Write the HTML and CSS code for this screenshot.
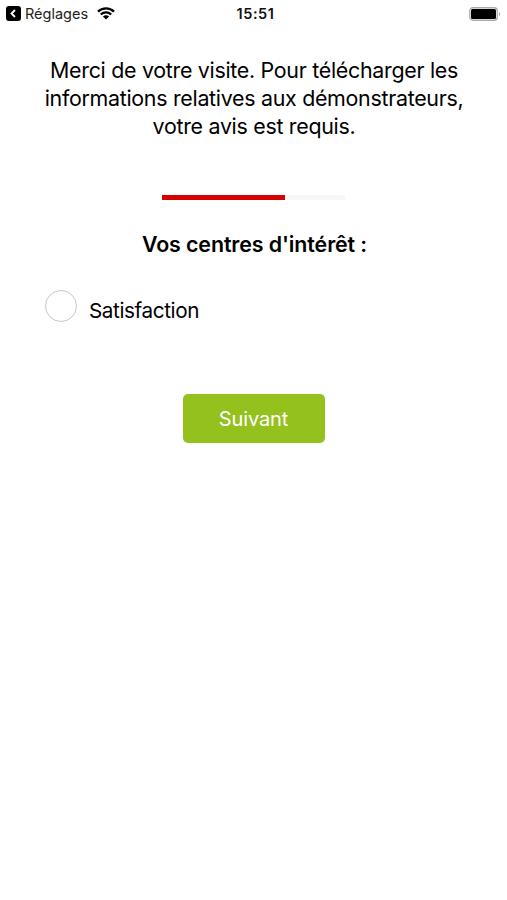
FILE: index.html
```html
<!DOCTYPE html>
<html lang="fr">
<head>
<meta charset="utf-8">
<title>Votre avis</title>
<link rel="stylesheet" href="styles.css">
</head>
<body>
<header class="status">
  <div class="status-left">
    <svg class="back" viewBox="0 0 15 15"><rect width="15" height="15" rx="3"/><path d="M9 4 5.5 7.5 9 11"/></svg>
    <span class="app">Réglages</span>
    <svg class="wifi" viewBox="0 0 18 13"><path d="M1 4.6a11.5 11.5 0 0 1 16 0M3.8 7.5a7.5 7.5 0 0 1 10.4 0"/><path class="dot" d="M9 12.6 5.9 9.5a4.4 4.4 0 0 1 6.2 0z"/></svg>
  </div>
  <span class="time">15:51</span>
  <svg class="battery" viewBox="0 0 32 14"><rect class="shell" x=".75" y=".75" width="27.5" height="12.5" rx="3"/><rect x="2" y="2" width="25" height="10" rx="1.5"/><path class="tip" d="M30 4.7q2 2.3 0 4.6z"/></svg>
</header>
<main>
  <p class="intro"><span>Merci de votre visite. Pour télécharger les</span><span>informations relatives aux démonstrateurs,</span><span>votre avis est requis.</span></p>
  <div class="progress"><div class="bar"></div></div>
  <h1>Vos centres d'intérêt :</h1>
  <label class="option"><span class="radio"></span><span class="label">Satisfaction</span></label>
  <button class="next">Suivant</button>
</main>
</body>
</html>
```
FILE: styles.css
```css
* { box-sizing: border-box; }
body { margin: 0; background: #fff; color: #000; font-family: Inter, "Liberation Sans", sans-serif; }
.status { height: 27px; padding: 0 6px; display: grid; grid-template-columns: 1fr auto 1fr; align-items: center; }
.status-left { display: flex; align-items: center; }
.back { width: 15px; height: 15px; }
.back path { fill: none; stroke: #fff; stroke-width: 1.8; }
.app { margin-left: 4px; font-size: 14.5px; line-height: 18px; white-space: nowrap; color: #222; }
.wifi { width: 18px; height: 13px; margin-left: 9px; }
.wifi path { fill: none; stroke: #000; stroke-width: 2.3; }
.wifi .dot { fill: #000; stroke: none; }
.time { padding-left: 4px; font-size: 14.5px; line-height: 18px; font-weight: 600; letter-spacing: .6px; color: #111; }
.battery { width: 32px; height: 14px; justify-self: end; }
.battery .shell { fill: none; stroke: #aaa; stroke-width: 1.3; }
.battery .tip { fill: #999; }
main { display: flex; flex-direction: column; align-items: center; padding-top: 29px; }
.intro { margin: 0 0 0 1px; font-size: 21.4px; line-height: 28px; letter-spacing: -.29px; text-align: center; }
.intro span { display: block; white-space: nowrap; }
.progress { width: 183px; height: 5px; margin-top: 55px; background: #f7f7f7; border-radius: 0 3px 0 0; }
.bar { width: 123px; height: 5px; background: #d60000; }
h1 { margin: 30px 0 0 2px; font-size: 21.4px; line-height: 28px; font-weight: 600; letter-spacing: -.1px; }
.option { align-self: stretch; display: flex; margin: 32px 0 0 45px; height: 32px; }
.radio { width: 32px; height: 32px; border: 1.5px solid #c8c8c8; border-radius: 50%; }
.label { margin: 7px 0 0 12px; font-size: 20.7px; line-height: 28px; letter-spacing: -.4px; }
.next { width: 142px; height: 49px; margin-top: 72px; padding: 0; border: 0; border-radius: 5px; background: #95c11f; color: #fff; font: 20px Inter, "Liberation Sans", sans-serif; letter-spacing: -.1px; }
```
